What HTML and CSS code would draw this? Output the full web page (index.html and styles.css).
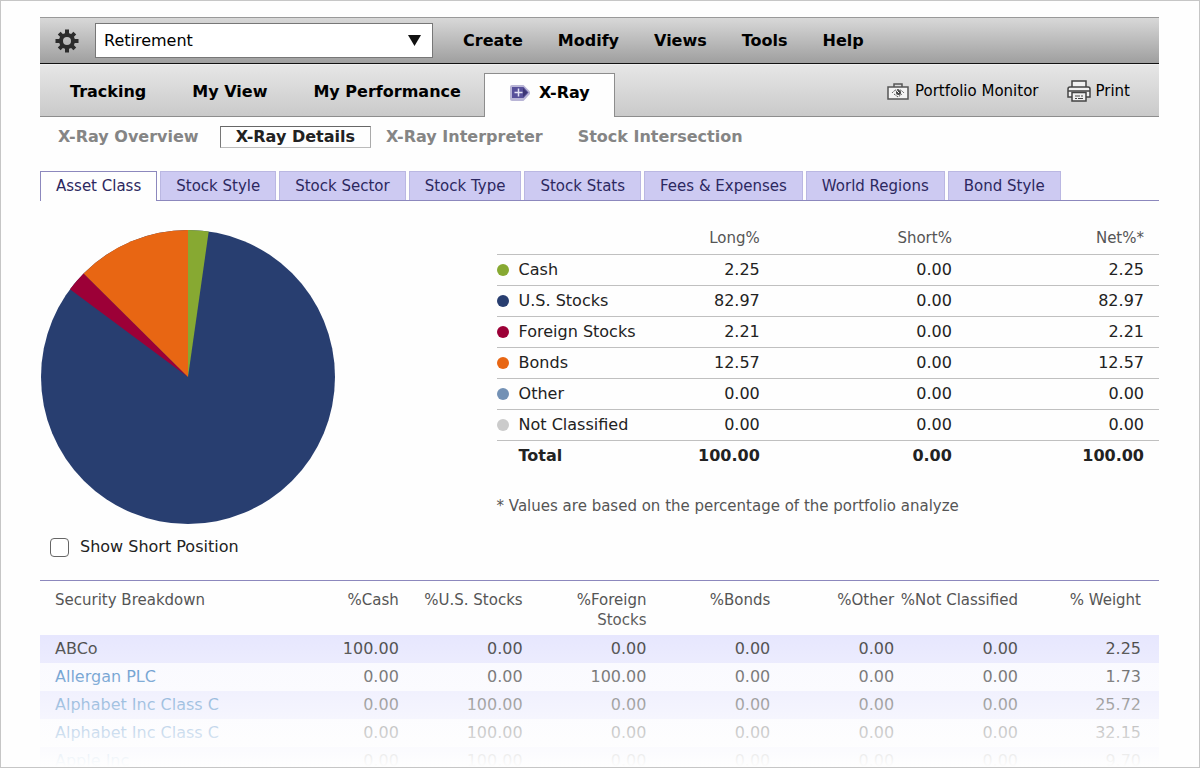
FILE: index.html
```html
<!DOCTYPE html>
<html lang="en">
  <head>
    <meta charset="UTF-8" />
    <meta name="viewport" content="width=device-width, initial-scale=1.0" />
    <title>X-Ray Details</title>
    <link rel="stylesheet" href="styles.css">
  </head>
  <body>
    <div class="page">
      <header class="toolbar">
        <button class="gear-btn" aria-label="Settings">
          <svg width="24" height="24" viewBox="0 0 24 24">
            <circle cx="12" cy="12" r="6" fill="none" stroke="#2b2b2b" stroke-width="4" />
            <g stroke="#2b2b2b" stroke-width="4">
              <path d="M12 0.500v5M12 18.500v5M0.500 12h5M18.500 12h5" />
              <path d="M4.200 4.200l3.200 3.200M16.600 16.600l3.200 3.200M19.800 4.200l-3.200 3.200M7.400 16.600l-3.200 3.200" />
            </g>
          </svg>
        </button>
        <div class="portfolio-select">
          <select aria-label="Portfolio">
            <option>Retirement</option>
          </select>
          <svg class="arrow" width="13" height="11" viewBox="0 0 13 11">
            <path d="M0 0h13L6.500 11z" fill="#111" />
          </svg>
        </div>
        <nav class="menu">
          <button>Create</button>
          <button>Modify</button>
          <button>Views</button>
          <button>Tools</button>
          <button>Help</button>
        </nav>
      </header>

      <div class="views">
        <nav class="view-links">
          <a href="#tracking">Tracking</a>
          <a href="#my-view">My View</a>
          <a href="#my-performance">My Performance</a>
        </nav>
        <a class="view-active" href="#x-ray" aria-current="page">
          <svg width="22" height="18" viewBox="0 0 22 18">
            <path d="M1 3Q1 1 3 1H14.500L21 7.500V10L14.500 17H3Q1 17 1 15z" fill="#b9b5d6" />
            <path d="M3 3h11.500L19.500 8.500 14.500 14H3z" fill="#57509a" />
            <path d="M14 4l4.500 4.500L14 13z" fill="#3d3675" />
            <path d="M9.500 4.500v8M5.500 8.500h8" stroke="#e4e2f4" stroke-width="1.500" />
          </svg>
          X-Ray
        </a>
        <div class="actions">
          <a href="#monitor">
            <svg width="22" height="17" viewBox="0 0 22 17" fill="none" stroke="#555">
              <path d="M7 4V1h8v3" stroke-width="1.500" />
              <rect x="1" y="4" width="20" height="12" fill="#f4f4f4" stroke-width="1.500" />
              <path d="M5 10q6-7 12 0M7 11l4 3 4-3" stroke-dasharray="2 1" />
              <circle cx="11.500" cy="9.500" r="2.500" fill="#444" stroke="none" />
              <path d="M10 8l2 2" stroke="#f4f4f4" />
            </svg>
            Portfolio Monitor
          </a>
          <a class="print" href="#print">
            <svg width="24" height="22" viewBox="0 0 24 22" fill="#f0f0f0" stroke="#444" stroke-width="1.500">
              <path d="M5 7V1h14v6" />
              <path d="M5 17H1V9q0-2 2-2h18q2 0 2 2v8h-4" />
              <path d="M1 11h22" fill="none" />
              <path d="M5 12.500h14V21H5z" />
              <path d="M8 16h5M14 16h2M8 18.500h2M11 18.500h5" stroke-width="1" />
            </svg>
            Print
          </a>
        </div>
      </div>

      <nav class="subnav">
        <a href="#overview">X-Ray Overview</a>
        <a class="current" href="#details">X-Ray Details</a>
        <a href="#interpreter">X-Ray Interpreter</a>
        <a href="#intersection">Stock Intersection</a>
      </nav>

      <nav class="tabs">
        <a class="current" href="#asset-class">Asset Class</a>
        <a href="#stock-style">Stock Style</a>
        <a href="#stock-sector">Stock Sector</a>
        <a href="#stock-type">Stock Type</a>
        <a href="#stock-stats">Stock Stats</a>
        <a href="#fees">Fees &amp; Expenses</a>
        <a href="#regions">World Regions</a>
        <a href="#bond-style">Bond Style</a>
      </nav>

      <main class="allocation">
        <section class="chart">
          <svg class="pie" viewBox="-147 -147 294 294" role="img" aria-label="Asset allocation">
            <circle r="147" fill="#283e70" />
            <path d="M0 0V-147A147 147 0 0 1 20.700 -145.500z" fill="#87a932" />
            <path d="M0 0L-118 -87.700A147 147 0 0 1 -104.400 -103.500z" fill="#9c0037" />
            <path d="M0 0L-104.400 -103.500A147 147 0 0 1 0 -147z" fill="#e86613" />
          </svg>
          <label class="short-position">
            <input type="checkbox" />
            Show Short Position
          </label>
        </section>

        <section class="summary">
          <table>
            <thead>
              <tr><th></th><th>Long%</th><th>Short%</th><th>Net%*</th></tr>
            </thead>
            <tbody>
              <tr><td><span class="dot cash"></span>Cash</td><td>2.25</td><td>0.00</td><td>2.25</td></tr>
              <tr><td><span class="dot us"></span>U.S. Stocks</td><td>82.97</td><td>0.00</td><td>82.97</td></tr>
              <tr><td><span class="dot foreign"></span>Foreign Stocks</td><td>2.21</td><td>0.00</td><td>2.21</td></tr>
              <tr><td><span class="dot bonds"></span>Bonds</td><td>12.57</td><td>0.00</td><td>12.57</td></tr>
              <tr><td><span class="dot other"></span>Other</td><td>0.00</td><td>0.00</td><td>0.00</td></tr>
              <tr><td><span class="dot none"></span>Not Classified</td><td>0.00</td><td>0.00</td><td>0.00</td></tr>
            </tbody>
            <tfoot>
              <tr><td><span class="dot"></span>Total</td><td>100.00</td><td>0.00</td><td>100.00</td></tr>
            </tfoot>
          </table>
          <p class="note">* Values are based on the percentage of the portfolio analyze</p>
        </section>
      </main>

      <section class="breakdown">
        <table>
          <thead>
            <tr>
              <th>Security Breakdown</th>
              <th>%Cash</th>
              <th>%U.S. Stocks</th>
              <th>%Foreign<br />Stocks</th>
              <th>%Bonds</th>
              <th>%Other</th>
              <th>%Not Classified</th>
              <th>% Weight</th>
            </tr>
          </thead>
          <tbody>
            <tr><td>ABCo</td><td>100.00</td><td>0.00</td><td>0.00</td><td>0.00</td><td>0.00</td><td>0.00</td><td>2.25</td></tr>
            <tr><td><a href="#agn">Allergan PLC</a></td><td>0.00</td><td>0.00</td><td>100.00</td><td>0.00</td><td>0.00</td><td>0.00</td><td>1.73</td></tr>
            <tr><td><a href="#goog">Alphabet Inc Class C</a></td><td>0.00</td><td>100.00</td><td>0.00</td><td>0.00</td><td>0.00</td><td>0.00</td><td>25.72</td></tr>
            <tr><td><a href="#goog">Alphabet Inc Class C</a></td><td>0.00</td><td>100.00</td><td>0.00</td><td>0.00</td><td>0.00</td><td>0.00</td><td>32.15</td></tr>
            <tr><td><a href="#aapl">Apple Inc</a></td><td>0.00</td><td>100.00</td><td>0.00</td><td>0.00</td><td>0.00</td><td>0.00</td><td>9.70</td></tr>
          </tbody>
        </table>
      </section>
    </div>
  </body>
</html>
```
FILE: styles.css
```css
:root {
  --line: #c0c0c0;
  --purple-line: #8c88bd;
  --tab-bg: #cdcaf2;
  --text: #222;
  --muted: #555;
}

* {
  margin: 0;
  padding: 0;
  box-sizing: border-box;
}

body {
  font-family: Verdana, "DejaVu Sans", sans-serif;
  font-size: 16px;
  line-height: 20px;
  color: var(--text);
  background: #fefefe;
}

a {
  color: inherit;
  text-decoration: none;
}

button {
  background: none;
  border: none;
  font: inherit;
  cursor: pointer;
}

table {
  width: 100%;
  border-collapse: collapse;
  table-layout: fixed;
}

.page {
  height: 100vh;
  display: flex;
  flex-direction: column;
  padding: 16px 40px 0 39px;
  border: 1px solid #c6c6c6;
  overflow: hidden;
}

/* top bar */
.toolbar {
  display: flex;
  align-items: center;
  flex-shrink: 0;
  height: 47px;
  padding-left: 15px;
  border-top: 1px solid #999;
  border-bottom: 1px solid #111;
  background: linear-gradient(#d8d8d8, #9f9f9f);
}

.gear-btn {
  width: 24px;
  height: 24px;
}

.portfolio-select {
  position: relative;
  width: 338px;
  margin-left: 16px;
}

.portfolio-select select {
  display: block;
  width: 100%;
  height: 35px;
  padding: 1px 8px 0;
  appearance: none;
  border: 1px solid #777;
  border-radius: 0;
  background: #fff;
  color: #000;
  font: inherit;
}

.arrow {
  position: absolute;
  top: 12px;
  right: 12px;
  pointer-events: none;
}

.menu {
  display: flex;
  gap: 35px;
  margin-left: 30px;
  padding-top: 1px;
}

.menu button,
.view-links,
.view-active {
  font-weight: bold;
  color: #000;
}

/* view bar */
.views {
  display: flex;
  flex-shrink: 0;
  height: 53px;
  border-top: 1px solid #eee;
  border-bottom: 1px solid #8d8d8d;
  background: linear-gradient(#e6e6e6, #cacaca);
}

.view-links {
  display: flex;
  align-items: center;
  gap: 46px;
  padding: 2px 23px 0 30px;
}

.view-active {
  display: flex;
  align-items: center;
  justify-content: center;
  gap: 8px;
  width: 131px;
  margin: 8px 0 -1px;
  padding-bottom: 5px;
  border: 1px solid #8d8d8d;
  border-bottom: none;
  background: #fefefe;
}

.actions {
  display: flex;
  align-items: center;
  gap: 29px;
  margin-left: auto;
  padding: 1px 29px 0 0;
  font-size: 15px;
  color: #000;
}

.actions a {
  display: flex;
  align-items: center;
  gap: 6px;
}

.actions .print {
  gap: 4px;
}

.subnav {
  display: flex;
  align-items: center;
  flex-shrink: 0;
  height: 39px;
  gap: 35px;
  padding-left: 18px;
  font-weight: bold;
  color: #858585;
}

.subnav .current {
  margin: 0 -20px 0 -14px;
  padding: 0 15px;
  border: 1px solid;
  border-color: #666 #aaa #bbb #777;
  color: var(--text);
}

/* section tabs */
.tabs {
  display: flex;
  flex-shrink: 0;
  gap: 3px;
  margin-top: 15px;
  border-bottom: 1px solid var(--purple-line);
  font-size: 15px;
  line-height: 28px;
  color: #2c2860;
}

.tabs a {
  padding: 0 15px;
  border: 1px solid #bab7e2;
  border-bottom: none;
  background: var(--tab-bg);
}

.tabs .current {
  margin-bottom: -1px;
  border-color: var(--purple-line);
  background: #fefefe;
}

.allocation {
  display: flex;
  justify-content: space-between;
  flex-shrink: 0;
  padding: 22px 0 23px;
}

.chart {
  padding-top: 7px;
}

.pie {
  display: block;
  width: 294px;
  margin-left: 1px;
}

.short-position {
  display: flex;
  align-items: center;
  gap: 11px;
  margin: 13px 0 0 10px;
}

.short-position input {
  width: 19px;
  height: 19px;
  appearance: none;
  border: 1px solid #666;
  border-radius: 4px;
  background: #fff;
}

.summary {
  width: 59.200%;
}

.summary th {
  height: 31px;
  padding-right: 15px;
  font-size: 15px;
  font-weight: normal;
  text-align: right;
  color: var(--muted);
}

.summary th:first-child {
  width: 13%;
}

.summary td {
  height: 31px;
  padding-right: 15px;
  border-top: 1px solid var(--line);
  text-align: right;
}

.summary td:first-child {
  padding-right: 0;
  text-align: left;
  white-space: nowrap;
}

.summary tfoot {
  font-weight: bold;
}

.dot {
  display: inline-block;
  width: 12px;
  height: 12px;
  margin-right: 10px;
  border-radius: 50%;
  vertical-align: -1px;
}

.cash { background: #87a932; }
.us { background: #283e70; }
.foreign { background: #9c0037; }
.bonds { background: #e86613; }
.other { background: #7391b5; }
.none { background: #cbcbcb; }

.note {
  margin-top: 25px;
  font-size: 15px;
  color: var(--muted);
}

/* holdings, fading out towards the bottom of the page */
.breakdown {
  position: relative;
  flex: 1;
  min-height: 0;
  overflow: hidden;
  border-top: 1px solid var(--purple-line);
}

.breakdown::after {
  content: "";
  position: absolute;
  inset: 32px 0 0;
  background: linear-gradient(rgba(254, 254, 254, 0), #fefefe);
  pointer-events: none;
}

.breakdown th {
  height: 54px;
  padding: 9px 0 0;
  font-size: 15px;
  font-weight: normal;
  text-align: right;
  vertical-align: top;
  white-space: nowrap;
  color: var(--muted);
}

.breakdown td {
  height: 28px;
  text-align: right;
}

.breakdown th:first-child,
.breakdown td:first-child {
  width: 21%;
  padding-left: 15px;
  text-align: left;
}

.breakdown th:last-child,
.breakdown td:last-child {
  width: 141px;
  padding-right: 18px;
}

.breakdown tbody tr {
  background: #f8f8ff;
}

.breakdown tbody tr:nth-child(odd) {
  background: #e3e3fe;
}

.breakdown td a {
  color: #1c6cb8;
}
```
